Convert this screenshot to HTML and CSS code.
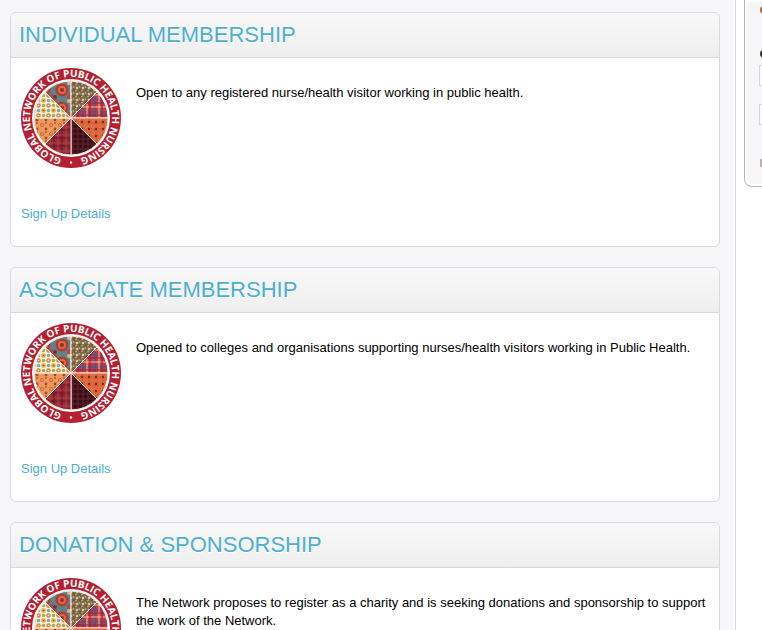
FILE: index.html
```
<!DOCTYPE html>
<html lang="en">
<head>
<meta charset="utf-8">
<title>Membership</title>
<link rel="stylesheet" href="styles.css">
</head>
<body>
<svg class="defs" aria-hidden="true">
  <defs>
    <pattern id="floral" width="18" height="18" x="32" y="13" patternUnits="userSpaceOnUse">
      <rect width="18" height="18" fill="#5b8588"/>
      <circle cx="9" cy="9" r="6.500" fill="#b23a38"/><circle cx="9" cy="9" r="4" fill="#e2683c"/><circle cx="9" cy="9" r="2" fill="#8c2f45"/>
      <circle cx="1" cy="2" r="3" fill="#c94435"/><circle cx="17" cy="16" r="3" fill="#c0453c"/><circle cx="16" cy="2" r="2" fill="#d8b78a"/><circle cx="2" cy="16" r="2" fill="#702f55"/>
    </pattern>
    <pattern id="leaves" width="6" height="6" patternUnits="userSpaceOnUse">
      <rect width="6" height="6" fill="#77694a"/>
      <circle cx="2" cy="2" r="1.3" fill="#d8c9a2"/><circle cx="5" cy="4" r="1" fill="#a63a35"/><path d="M0 5l2-1M4 0l1 2" stroke="#b7bd87"/>
    </pattern>
    <pattern id="tartan" width="12" height="12" patternUnits="userSpaceOnUse">
      <rect width="12" height="12" fill="#c43a3e"/>
      <path d="M2 0v12M0 8h12" stroke="#47588e" stroke-width="2" opacity=".7"/><path d="M6 0v12M0 3h12" stroke="#efc09a"/><path d="M9 0v12M0 11h12" stroke="#8a2348"/>
    </pattern>
    <pattern id="blossom" width="7" height="7" patternUnits="userSpaceOnUse">
      <rect width="7" height="7" fill="#dd6436"/>
      <circle cx="2" cy="2" r="1.600" fill="#f28e54"/><circle cx="5" cy="5" r="1.200" fill="#7c2420"/><circle cx="2" cy="2" r=".7" fill="#8d2d20"/>
    </pattern>
    <pattern id="dark" width="5" height="5" patternUnits="userSpaceOnUse">
      <rect width="5" height="5" fill="#35131a"/><path d="M0 1h5M2 0v5" stroke="#7c2030" stroke-width=".8"/><circle cx="4" cy="3" r=".7" fill="#120b0d"/>
    </pattern>
    <pattern id="plaid" width="8" height="8" patternUnits="userSpaceOnUse">
      <rect width="8" height="8" fill="#9b2836"/><path d="M1 0v8M0 6h8" stroke="#701c2c" stroke-width="1.500"/><path d="M5 0v8M0 3h8" stroke="#b85558" stroke-width=".6"/>
    </pattern>
    <pattern id="petals" width="9" height="9" patternUnits="userSpaceOnUse">
      <rect width="9" height="9" fill="#ea9a5c"/><circle cx="3" cy="3" r="2" fill="#d85e38"/><circle cx="3" cy="3" r=".8" fill="#f8d27d"/><circle cx="7" cy="7" r="1.400" fill="#b64029"/><circle cx="7" cy="1" r=".8" fill="#693824"/>
    </pattern>
    <pattern id="dots" width="10" height="10" patternUnits="userSpaceOnUse">
      <rect width="10" height="10" fill="#f5efdc"/><circle cx="2.500" cy="2.500" r="2.300" fill="#e5aa2c"/><circle cx="7.500" cy="7.500" r="2.300" fill="#d08a4c"/><circle cx="7.500" cy="2.500" r="1.800" fill="#7aaab4"/><circle cx="2.500" cy="7.500" r="1.800" fill="#a6b047"/><circle cx="2.500" cy="2.500" r=".8" fill="#b34743"/><circle cx="7.500" cy="7.500" r=".8" fill="#f5efdc"/>
    </pattern>
    <path id="ring" d="M50 91A41 41 0 0 1 50 9A41 41 0 0 1 50 91"/>
    <symbol id="logo" viewBox="0 0 100 100">
      <circle cx="50" cy="50" r="50" fill="#b51f30"/>
      <circle cx="50" cy="50" r="39" fill="#fff"/>
      <g stroke="#f7e6d9" stroke-width="1">
        <path d="M50 50L24 24A37 37 0 0 1 50 13Z" fill="url(#floral)"/>
        <path d="M50 50V13A37 37 0 0 1 76 24Z" fill="url(#leaves)"/>
        <path d="M50 50L76 24A37 37 0 0 1 87 50Z" fill="url(#tartan)"/>
        <path d="M50 50H87A37 37 0 0 1 76 76Z" fill="url(#blossom)"/>
        <path d="M50 50L76 76A37 37 0 0 1 50 87Z" fill="url(#dark)"/>
        <path d="M50 50V87A37 37 0 0 1 24 76Z" fill="url(#plaid)"/>
        <path d="M50 50L24 76A37 37 0 0 1 13 50Z" fill="url(#petals)"/>
        <path d="M50 50H13A37 37 0 0 1 24 24Z" fill="url(#dots)"/>
      </g>
      <text class="logo-text"><textPath href="#ring" startOffset="50%">GLOBAL NETWORK OF PUBLIC HEALTH NURSING</textPath></text>
      <circle cx="50" cy="94.500" r="1.200" fill="#fff"/>
    </symbol>
  </defs>
</svg>
<div class="page">
  <main class="content">
    <section class="card">
      <h2>INDIVIDUAL MEMBERSHIP</h2>
      <div class="body">
        <div class="intro">
          <svg class="logo" role="img" aria-label="Global Network of Public Health Nursing"><use href="#logo"/></svg>
          <p>Open to any registered nurse/health visitor working in public health.</p>
        </div>
        <a href="#individual">Sign Up Details</a>
      </div>
    </section>
    <section class="card">
      <h2>ASSOCIATE MEMBERSHIP</h2>
      <div class="body">
        <div class="intro">
          <svg class="logo" role="img" aria-label="Global Network of Public Health Nursing"><use href="#logo"/></svg>
          <p>Opened to colleges and organisations supporting nurses/health visitors working in Public Health.</p>
        </div>
        <a href="#associate">Sign Up Details</a>
      </div>
    </section>
    <section class="card">
      <h2>DONATION &amp; SPONSORSHIP</h2>
      <div class="body">
        <div class="intro">
          <svg class="logo" role="img" aria-label="Global Network of Public Health Nursing"><use href="#logo"/></svg>
          <p>The Network proposes to register as a charity and is seeking donations and sponsorship to support the work of the Network.</p>
        </div>
      </div>
    </section>
  </main>
  <aside class="side">
    <form class="panel">
      <span class="mark"></span>
      <span class="mark mark-dark"></span>
      <input type="text" aria-label="Username">
      <input type="password" aria-label="Password">
      <span class="mark mark-pale"></span>
    </form>
  </aside>
</div>
</body>
</html>
```
FILE: styles.css
```
* { box-sizing: border-box; }
body {
  margin: 0;
  background: #fff;
  color: #000;
  font: 13px/18px "Liberation Sans", Arial, sans-serif;
  overflow: hidden;
}
.defs { position: absolute; width: 0; height: 0; }
.page { display: flex; height: 100vh; overflow: hidden; }
.content {
  flex: 1;
  display: flex;
  flex-direction: column;
  gap: 20px;
  padding: 12px 13px 0 10px;
  background: #f6f6f9;
}
.card {
  flex: none;
  background: #fff;
  border: 1px solid #d9dade;
  border-radius: 6px;
  overflow: hidden;
}
h2 {
  margin: 0;
  padding: 8px;
  border-bottom: 1px solid #d9dade;
  background: linear-gradient(#f8f8f8, #efefef);
  color: #4bb0d1;
  font-size: 22px;
  font-weight: 400;
  line-height: 28px;
  text-shadow: 0 1px 0 #fff;
}
.body { padding: 10px 10px 23px; }
.intro { display: flex; gap: 15px; min-height: 137px; }
.intro p { flex: 1; margin: 16px 0 0; }
.logo { flex: none; width: 100px; height: 100px; }
.logo-text {
  fill: #fff;
  font: bold 10px "Open Sans", sans-serif;
  text-anchor: middle;
}
a { color: #4bb0d1; text-decoration: none; }
.side {
  flex: none;
  width: 27px;
  margin-left: 2px;
  border-left: 1px solid #dedee0;
  padding-left: 8px;
  overflow: hidden;
}
.panel {
  width: 240px;
  padding: 6px 14px 19px;
  background: #f6f6f9;
  border: 1px solid #b5b5b8;
  border-top: 0;
  border-radius: 0 0 8px 8px;
  box-shadow: inset 0 0 0 2px #fff;
  display: flex;
  flex-direction: column;
}
.panel input {
  height: 21px;
  margin: 0 0 18px;
  padding: 0 4px;
  border: 1px solid #d5d6dc;
  border-radius: 0;
  background: #fafafc;
}
.mark { width: 8px; height: 8px; margin: 0 0 36px 1px; background: #b5602c; border-radius: 4px; }
.mark-dark { background: #33251c; margin-bottom: 7px; }
.mark-pale { background: #b9b2ae; border-radius: 0; margin: 16px 0 0 1px; }
```
